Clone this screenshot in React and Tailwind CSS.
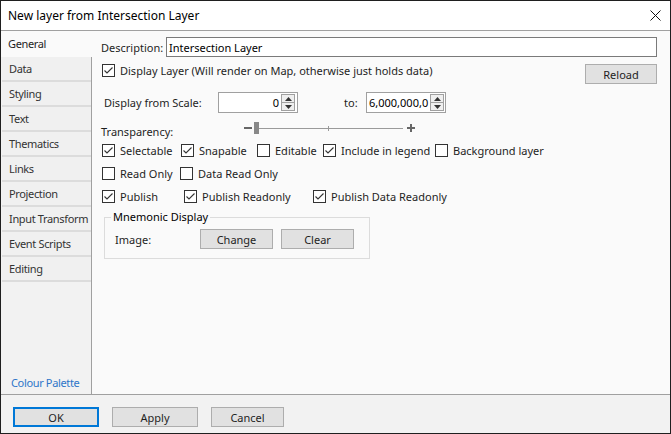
import React from "react";

const font = { fontFamily: '"Segoe UI", "Noto Sans", sans-serif' };

function Check({ checked }) {
  return (
    <span className="w-[13px] h-[13px] border border-[#333333] bg-white shrink-0 flex items-center justify-center">
      {checked && (
        <svg width="11" height="11" viewBox="0 0 11 11">
          <polyline points="1.5,5.5 4,8 9.5,2.5" fill="none" stroke="#333333" strokeWidth="1.1" />
        </svg>
      )}
    </span>
  );
}

function CheckItem({ checked, label, w }) {
  return (
    <div className={`flex items-center gap-[5px] shrink-0 ${w}`}>
      <Check checked={checked} />
      <span>{label}</span>
    </div>
  );
}

function Btn({ children, w, primary }) {
  return (
    <button
      className={`${w} h-[20px] bg-[#e1e1e1] text-[#1e1e1e] flex items-center justify-center shrink-0 ${
        primary ? "border-2 border-[#0078d7]" : "border border-[#adadad]"
      }`}
    >
      {children}
    </button>
  );
}

function Spinner({ value, align }) {
  return (
    <div className="w-[80px] h-[21px] border border-[#a0a0a0] bg-white flex items-center shrink-0">
      <span className={`flex-1 px-[2px] leading-[15px] ${align === "right" ? "text-right" : "text-left"} text-[#000]`}>
        {value}
      </span>
      <div className="w-[14px] h-[17px] mr-[2px] flex flex-col shrink-0">
        <div className="flex-1 border border-[#a0a0a0] bg-[#efefef] flex items-center justify-center">
          <svg width="7" height="4" viewBox="0 0 7 4">
            <polygon points="0,4 3.5,0 7,4" fill="#333" />
          </svg>
        </div>
        <div className="flex-1 border border-t-0 border-[#a0a0a0] bg-[#efefef] flex items-center justify-center">
          <svg width="7" height="4" viewBox="0 0 7 4">
            <polygon points="0,0 3.5,4 7,0" fill="#333" />
          </svg>
        </div>
      </div>
    </div>
  );
}

const tabs = [
  "Data",
  "Styling",
  "Text",
  "Thematics",
  "Links",
  "Projection",
  "Input Transform",
  "Event Scripts",
  "Editing",
];

export default function App() {
  return (
    <div
      style={font}
      className="w-[671px] h-[434px] border border-[#1f1f1f] bg-[#f2f2f2] flex flex-col text-[11px] text-[#1e1e1e] leading-none overflow-hidden whitespace-nowrap"
    >
      {/* title bar */}
      <div className="h-[29px] bg-white flex items-center justify-between pl-[7px] pr-[9px] shrink-0">
        <span className="text-[#000] text-[12px]">New layer from Intersection Layer</span>
        <svg width="11" height="11" viewBox="0 0 11 11">
          <path d="M0.5 0.5 L10.5 10.5 M10.5 0.5 L0.5 10.5" stroke="#111" strokeWidth="1" />
        </svg>
      </div>

      {/* body */}
      <div className="flex h-[365px] border-t border-b border-[#a0a0a0] shrink-0">
        {/* tabs */}
        <div className="w-[91px] flex flex-col shrink-0 tracking-[-0.35px]">
          <div className="h-[26px] bg-[#fafafa] flex items-center pl-[7px] pb-[2px] text-[#1e1e1e]">General</div>
          <div className="flex-1 flex flex-col border-r border-[#a0a0a0] pl-[1px]">
            {tabs.map((t) => (
              <div
                key={t}
                className="h-[25px] bg-[#f0f0f0] border-b-2 border-[#dcdcdc] flex items-center pl-[7px] text-[#333]"
              >
                {t}
              </div>
            ))}
            <div className="flex-1 flex items-end pl-[9px] pb-[6px] text-[#2e76c9]">Colour Palette</div>
          </div>
        </div>

        {/* panel */}
        <div className="flex-1 bg-[#fafafa] pl-[9px] pr-[13px] pt-[6px] flex flex-col">
          <div className="flex items-center h-[20px]">
            <span className="w-[65px] shrink-0">Description:</span>
            <div className="flex-1 h-[20px] border border-[#7a7a7a] bg-white flex items-center px-[2px] text-[#000]">
              Intersection Layer
            </div>
          </div>

          <div className="flex items-start justify-between mt-[7px] h-[21px]">
            <div className="flex items-center gap-[5px] pl-[1px]">
              <Check checked />
              <span>Display Layer (Will render on Map, otherwise just holds data)</span>
            </div>
            <Btn w="w-[72px]">Reload</Btn>
          </div>

          <div className="flex items-center mt-[7px] h-[21px] pl-[3px]">
            <span className="w-[114px] shrink-0">Display from Scale:</span>
            <Spinner value="0" align="right" />
            <span className="ml-[46px] w-[22px] shrink-0">to:</span>
            <Spinner value="6,000,000,0" />
          </div>

          <div className="flex items-center h-[22px] mt-[4px]">
            <span className="w-[140px] mt-[6px] shrink-0">Transparency:</span>
            <div className="relative w-[180px] h-[14px] flex items-center">
              <span className="w-[8px] h-[2px] bg-[#666] ml-[3px]" />
              <div className="relative ml-[4px] w-[147px] h-[1px] bg-[#9a9a9a]">
                <span className="absolute left-[72px] -top-[2px] w-[1px] h-[5px] bg-[#9a9a9a]" />
                <span className="absolute -left-[2px] -top-[6px] w-[5px] h-[12px] bg-[#888]" />
              </div>
              <span className="ml-[4px] relative w-[8px] h-[8px]">
                <span className="absolute left-0 top-[3px] w-[8px] h-[2px] bg-[#666]" />
                <span className="absolute left-[3px] top-0 w-[2px] h-[8px] bg-[#666]" />
              </span>
            </div>
          </div>

          <div className="flex items-center mt-[3px] h-[16px] pl-[1px]">
            <CheckItem checked label="Selectable" w="w-[79px]" />
            <CheckItem checked label="Snapable" w="w-[76px]" />
            <CheckItem label="Editable" w="w-[66px]" />
            <CheckItem checked label="Include in legend" w="w-[112px]" />
            <CheckItem label="Background layer" w="" />
          </div>

          <div className="flex items-center mt-[7px] h-[16px] pl-[1px]">
            <CheckItem label="Read Only" w="w-[78px]" />
            <CheckItem label="Data Read Only" w="" />
          </div>

          <div className="flex items-center mt-[7px] h-[16px] pl-[1px]">
            <CheckItem checked label="Publish" w="w-[82px]" />
            <CheckItem checked label="Publish Readonly" w="w-[129px]" />
            <CheckItem checked label="Publish Data Readonly" w="" />
          </div>

          <div className="relative mt-[13px] ml-[3px] w-[266px] h-[42px] border border-[#dcdcdc] flex items-center pl-[10px]">
            <span className="absolute -top-[7px] left-[6px] bg-[#fafafa] px-[2px] text-[#000]">Mnemonic Display</span>
            <span className="w-[85px] mt-[2px] shrink-0">Image:</span>
            <div className="flex gap-[8px] mt-[2px]">
              <Btn w="w-[73px]">Change</Btn>
              <Btn w="w-[73px]">Clear</Btn>
            </div>
          </div>
        </div>
      </div>

      {/* footer */}
      <div className="flex-1 flex items-start pt-[12px] gap-[13px] pl-[12px]">
        <Btn w="w-[86px]" primary>OK</Btn>
        <Btn w="w-[86px]">Apply</Btn>
        <Btn w="w-[73px]">Cancel</Btn>
      </div>
    </div>
  );
}
